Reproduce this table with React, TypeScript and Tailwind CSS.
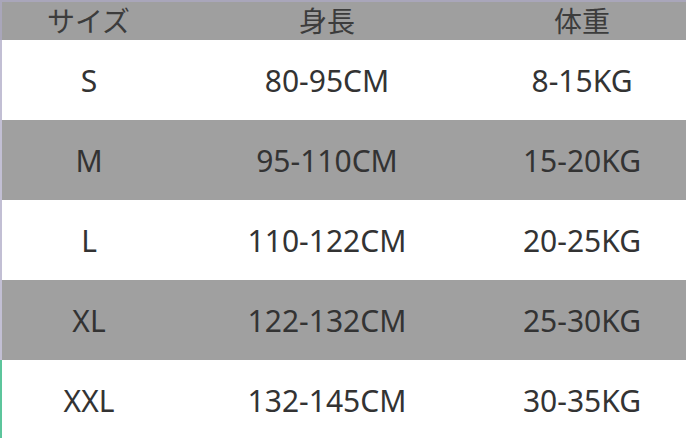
const rows = [
  { size: "S", height: "80-95CM", weight: "8-15KG" },
  { size: "M", height: "95-110CM", weight: "15-20KG" },
  { size: "L", height: "110-122CM", weight: "20-25KG" },
  { size: "XL", height: "122-132CM", weight: "25-30KG" },
  { size: "XXL", height: "132-145CM", weight: "30-35KG" },
];

const font = { fontFamily: '"Noto Sans", "Noto Sans CJK JP", sans-serif' };

export default function App() {
  return (
    <div className="w-[686px] h-[438px] overflow-hidden bg-white text-[#333]" style={font}>
      <div className="grid grid-cols-[176px_298px_212px] h-[40px] items-center bg-[#9f9f9f] border-t-2 border-l-2 border-[#a9a6ba] text-[28px] leading-none text-[#3c3c3c]">
        <div className="text-center -ml-[3px]">サイズ</div>
        <div className="text-center">身長</div>
        <div className="text-center">体重</div>
      </div>
      {rows.map((r, i) => (
        <div
          key={r.size}
          className={`grid grid-cols-[176px_298px_212px] h-[80px] items-center text-[30px] border-l-2 ${
            i % 2 === 1 ? "bg-[#a0a0a0]" : "bg-white"
          } ${i === rows.length - 1 ? "border-[#5cc59c]" : "border-[#c2bfd4]"}`}
        >
          <div className="text-center -ml-[2px]">{r.size}</div>
          <div className="text-center">{r.height}</div>
          <div className="text-center">{r.weight}</div>
        </div>
      ))}
    </div>
  );
}
